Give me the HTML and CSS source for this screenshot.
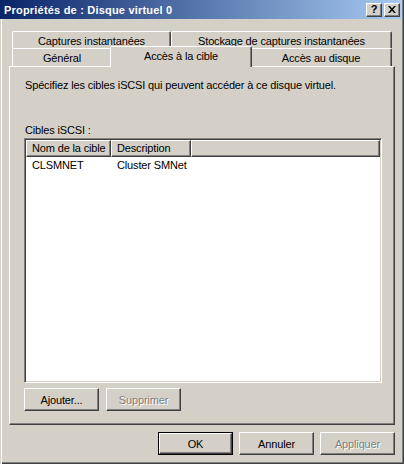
FILE: index.html
```html
<!DOCTYPE html>
<html>
<head>
	<title>Propriétés de : Disque virtuel 0</title>
	<link rel="stylesheet" href="styles.css">
</head>
<body>
	<div class="window">

		<div class="titlebar">
			<span class="title">Propriétés de : Disque virtuel 0</span>
			<div class="caption-buttons">
				<div class="cap-btn help">?</div>
				<div class="cap-btn close">
					<svg width="8" height="7" viewBox="0 0 8 7">
						<path d="M0 0h2l2 2.5L6 0h2L5 3.5 8 7H6L4 4.5 2 7H0l3-3.5z" fill="#000"/>
					</svg>
				</div>
			</div>
		</div><!-- / titlebar -->

		<div class="tabs">
			<div class="tab-row back">
				<div class="tab t-captures">Captures instantanées</div>
				<div class="tab t-stockage">Stockage de captures instantanées</div>
			</div>
			<div class="tab-row front">
				<div class="tab t-general">Général</div>
				<div class="tab t-cible selected">Accès à la cible</div>
				<div class="tab t-disque">Accès au disque</div>
			</div>
		</div><!-- / tabs -->

		<div class="panel">
			<p class="intro">Spécifiez les cibles iSCSI qui peuvent accéder à ce disque virtuel.</p>
			<p class="label">Cibles iSCSI :</p>

			<div class="listview">
				<div class="lv-header">
					<div class="lv-col col-nom">Nom de la cible</div>
					<div class="lv-col col-desc">Description</div>
					<div class="lv-col col-rest"></div>
				</div>
				<div class="lv-row">
					<div class="lv-cell col-nom">CLSMNET</div>
					<div class="lv-cell col-desc">Cluster SMNet</div>
				</div>
			</div>

			<div class="panel-buttons">
				<div class="btn">Ajouter...</div>
				<div class="btn disabled">Supprimer</div>
			</div>
		</div><!-- / panel -->

		<div class="footer">
			<div class="btn default"><span>OK</span></div>
			<div class="btn">Annuler</div>
			<div class="btn disabled">Appliquer</div>
		</div>

	</div><!-- / window -->
</body>
</html>
```

FILE: styles.css
```css
body {
	margin: 0;
	background: #d4d0c8;
	font-family: "Liberation Sans", Arial, sans-serif;
	font-size: 11px;
	letter-spacing: -0.15px;
	color: #000;
}

p {
	margin: 0;
}

.window {
	width: 404px;
	height: 464px;
	box-sizing: border-box;
	background: #d4d0c8;
	box-shadow: inset 1px 0 #d4d0c8, inset 2px 0 #fff,
		inset -1px -1px #404040, inset -2px -2px #808080;
}

/* title bar */
.titlebar {
	height: 19px;
	margin-right: 3px;
	display: flex;
	align-items: center;
	justify-content: space-between;
	background: linear-gradient(to right, #0a246a, #a6caf0);
}

.title {
	padding-left: 4px;
	padding-top: 1px;
	color: #fff;
	font-weight: bold;
	font-size: 11px;
	letter-spacing: 0.2px;
}

.caption-buttons {
	display: flex;
	gap: 2px;
	padding-right: 1px;
}

.cap-btn {
	width: 16px;
	height: 14px;
	box-sizing: border-box;
	display: flex;
	align-items: center;
	justify-content: center;
	background: #d4d0c8;
	border: 1px solid;
	border-color: #fff #404040 #404040 #fff;
	box-shadow: inset -1px -1px #808080;
}

.cap-btn.help {
	font-weight: bold;
	font-size: 11px;
	line-height: 12px;
	padding-bottom: 1px;
}

/* tabs */
.tabs {
	padding-top: 12px;
}

.tab-row {
	display: flex;
	padding-left: 12px;
}

.tab-row.back {
	height: 17px;
}

.tab-row.front {
	height: 18px;
}

.tab {
	box-sizing: border-box;
	display: flex;
	align-items: center;
	justify-content: center;
	border-top: 1px solid #fff;
	border-left: 1px solid #fff;
	border-right: 1px solid #404040;
	border-radius: 2px 2px 0 0;
	box-shadow: inset -1px 0 #808080;
	background: #d4d0c8;
	white-space: nowrap;
}

.back .tab {
	height: 17px;
	padding-top: 1px;
}

.front .tab {
	height: 18px;
	padding-top: 1px;
}

.t-captures { width: 159px; }
.t-stockage { width: 221px; }
.t-general  { width: 100px; }
.t-cible    { width: 138px; }
.t-disque   { width: 142px; }

.front .tab.selected {
	width: 142px;
	height: 21px;
	margin: -2px -2px 0 -2px;
	padding-top: 0;
	padding-bottom: 3px;
	position: relative;
	z-index: 1;
}

/* panel */
.panel {
	margin-left: 9px;
	width: 386px;
	height: 359px;
	box-sizing: border-box;
	padding: 12px 0 0 14px;
	border-top: 1px solid #fff;
	border-left: 1px solid #fff;
	border-right: 1px solid #404040;
	border-bottom: 1px solid #404040;
	box-shadow: inset -1px -1px #808080;
}

.intro,
.label {
	line-height: 13px;
	padding-left: 1px;
}

.label {
	margin-top: 32px;
}

.listview {
	margin-top: 1px;
	width: 358px;
	height: 245px;
	box-sizing: border-box;
	background: #fff;
	border: 1px solid;
	border-color: #808080 #fff #fff #808080;
	box-shadow: inset 1px 1px #404040, inset -1px -1px #d4d0c8;
	padding: 1px;
}

.lv-header {
	display: flex;
	height: 17px;
}

.lv-col {
	box-sizing: border-box;
	height: 17px;
	line-height: 15px;
	background: #d4d0c8;
	border: 1px solid;
	border-color: #fff #404040 #404040 #fff;
	box-shadow: inset -1px -1px #808080;
	white-space: nowrap;
}

.lv-col.col-nom {
	width: 85px;
	padding-left: 5px;
}

.lv-col.col-desc {
	width: 80px;
	padding-left: 5px;
}

.lv-col.col-rest {
	flex: 1;
}

.lv-row {
	display: flex;
	height: 16px;
	line-height: 16px;
}

.lv-cell.col-nom {
	width: 85px;
	padding-left: 6px;
	box-sizing: border-box;
}

.lv-cell.col-desc {
	padding-left: 6px;
}

.panel-buttons {
	display: flex;
	gap: 7px;
	margin-top: 5px;
}

/* buttons */
.btn {
	width: 75px;
	height: 23px;
	box-sizing: border-box;
	display: flex;
	align-items: center;
	justify-content: center;
	background: #d4d0c8;
	border: 1px solid;
	border-color: #fff #404040 #404040 #fff;
	box-shadow: inset -1px -1px #808080;
}

.btn.disabled {
	color: #808080;
	text-shadow: 1px 1px #fff;
}

.btn.default {
	border: 1px solid #000;
	box-shadow: none;
	padding: 0;
}

.btn.default span {
	flex: 1;
	align-self: stretch;
	display: flex;
	align-items: center;
	justify-content: center;
	border: 1px solid;
	border-color: #fff #404040 #404040 #fff;
	box-shadow: inset -1px -1px #808080;
}

.footer {
	display: flex;
	justify-content: flex-end;
	gap: 6px;
	padding: 7px 9px 0 0;
}
```
